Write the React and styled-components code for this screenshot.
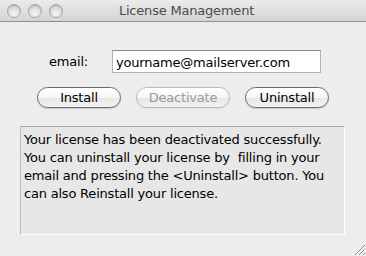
import React from 'react'
import styled, { createGlobalStyle } from 'styled-components'

const GlobalStyle = createGlobalStyle`
    html, body {
        margin: 0;
        padding: 0;
        background: #ededed;
    }
    * {
        box-sizing: border-box;
    }
`;

const WindowStyled = styled.div`
    width: 366px;
    height: 256px;
    background: #ededed;
    font-family: "DejaVu Sans", "Liberation Sans", sans-serif;
    font-size: 13px;
    letter-spacing: -0.2px;
    color: #000;
    display: flex;
    flex-direction: column;
    position: relative;
    overflow: hidden;
`;

const TitleBar = styled.div`
    height: 22px;
    flex: none;
    display: grid;
    grid-template-columns: 1fr auto 1fr;
    align-items: center;
    padding-left: 7px;
    background: linear-gradient(#ebebeb, #d4d4d4);
    border-bottom: 1px solid #8f8f8f;
`;

const Lights = styled.div`
    display: flex;
    gap: 7px;
`;

const Light = styled.span`
    width: 14px;
    height: 14px;
    border-radius: 50%;
    border: 1px solid #a6a6a6;
    background: radial-gradient(circle at 50% 75%, #f6f6f6 0%, #dedede 55%, #c6c6c6 100%);
    box-shadow: inset 0 1px 1px rgba(0, 0, 0, 0.15);
`;

const Title = styled.div`
    text-align: center;
    font-size: 13px;
    color: #4a4a4a;
`;

const Content = styled.div`
    flex: 1;
    display: flex;
    flex-direction: column;
    padding: 28px 21px 0 20px;
`;

const EmailRow = styled.div`
    display: flex;
    align-items: center;
    height: 23px;
    padding-left: 29px;
    gap: 24px;
`;

const Label = styled.label`
    font-size: 13px;
`;

const Field = styled.input`
    width: 209px;
    height: 23px;
    border: 1px solid #b3b3b3;
    border-top-color: #8a8a8a;
    background: #fff;
    font-family: inherit;
    font-size: 13px;
    letter-spacing: inherit;
    color: #000;
    padding: 1px 3px 0;
    outline: none;
`;

const ButtonRow = styled.div`
    display: flex;
    margin-top: 14px;
    padding-left: 17px;
    gap: 15px;
`;

const PushButton = styled.button`
    width: ${p => p.$w}px;
    height: 21px;
    border-radius: 11px;
    border: 1px solid ${p => (p.disabled ? '#b9b9b9' : '#6b6b6b')};
    background: linear-gradient(#ffffff 0%, #f6f6f6 50%, #e6e6e6 51%, #f3f3f3 100%);
    box-shadow: 0 1px 1px rgba(0, 0, 0, ${p => (p.disabled ? 0.05 : 0.15)});
    font-family: inherit;
    font-size: 13px;
    letter-spacing: inherit;
    color: ${p => (p.disabled ? '#9a9a9a' : '#000')};
    padding: 0;
    line-height: 19px;
`;

const Message = styled.div`
    margin-top: 18px;
    height: 109px;
    background: #e7e7e7;
    border: 1px solid #fff;
    border-top-color: #a9a9a9;
    border-left-color: #bdbdbd;
    padding: 4px 3px;
    font-size: 13px;
    line-height: 18px;
    color: #000;
`;

const Grip = styled.svg`
    position: absolute;
    right: 1px;
    bottom: 1px;
`;

const App = () => {
    return (
        <WindowStyled>
            <GlobalStyle />
            <TitleBar>
                <Lights>
                    <Light />
                    <Light />
                    <Light />
                </Lights>
                <Title>License Management</Title>
                <span />
            </TitleBar>
            <Content>
                <EmailRow>
                    <Label>email:</Label>
                    <Field defaultValue="yourname@mailserver.com" />
                </EmailRow>
                <ButtonRow>
                    <PushButton $w={84}>Install</PushButton>
                    <PushButton $w={94} disabled>Deactivate</PushButton>
                    <PushButton $w={84}>Uninstall</PushButton>
                </ButtonRow>
                <Message>
                    Your license has been deactivated successfully. You can uninstall your license by&nbsp; filling in your email and pressing the &lt;Uninstall&gt; button. You can also Reinstall your license.
                </Message>
            </Content>
            <Grip width="11" height="11" viewBox="0 0 11 11">
                <path d="M1 11 L11 1 M5 11 L11 5 M9 11 L11 9" stroke="#8a8a8a" strokeWidth="1" />
                <path d="M2 11 L11 2 M6 11 L11 6 M10 11 L11 10" stroke="#fff" strokeWidth="1" />
            </Grip>
        </WindowStyled>
    )
}

export default App
